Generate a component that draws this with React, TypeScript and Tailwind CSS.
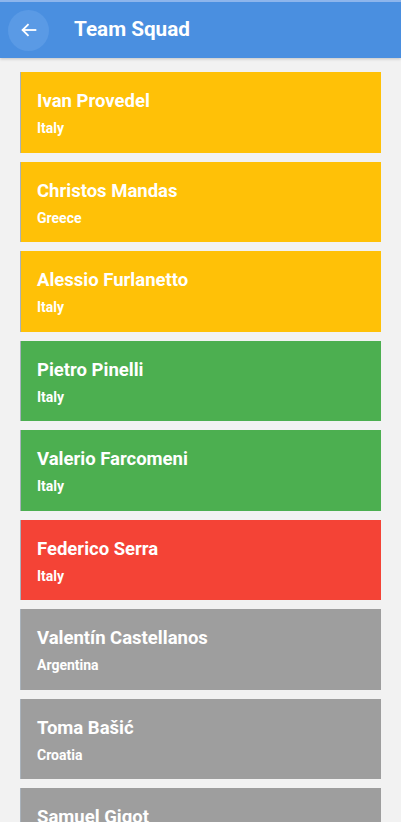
import React from "react";

const players = [
  { name: "Ivan Provedel", country: "Italy", color: "bg-[#FFC107]" },
  { name: "Christos Mandas", country: "Greece", color: "bg-[#FFC107]" },
  { name: "Alessio Furlanetto", country: "Italy", color: "bg-[#FFC107]" },
  { name: "Pietro Pinelli", country: "Italy", color: "bg-[#4CAF50]" },
  { name: "Valerio Farcomeni", country: "Italy", color: "bg-[#4CAF50]" },
  { name: "Federico Serra", country: "Italy", color: "bg-[#F44336]" },
  { name: "Valentín Castellanos", country: "Argentina", color: "bg-[#9E9E9E]" },
  { name: "Toma Bašić", country: "Croatia", color: "bg-[#9E9E9E]" },
  { name: "Samuel Gigot", country: "France", color: "bg-[#9E9E9E]" },
  { name: "Mario Gila", country: "Spain", color: "bg-[#9E9E9E]" },
];

export default function App() {
  return (
    <div
      className="w-[401px] h-[822px] overflow-hidden bg-[#f2f2f2] flex flex-col"
      style={{ fontFamily: "Roboto, 'Noto Sans', sans-serif" }}
    >
      <div className="shrink-0 border-t-2 border-[#8db5ec] bg-[#4a8fe0] h-[58px] flex items-center shadow-[0_1px_3px_rgba(0,0,0,0.2)] z-10">
        <button className="ml-[8px] w-[41px] h-[41px] rounded-full bg-[#5a9ae5] flex items-center justify-center">
          <svg width="22" height="22" viewBox="0 0 24 24" fill="none" stroke="white" strokeWidth="2">
            <path d="M20 12H5" />
            <path d="M11.5 5.5L5 12l6.5 6.5" />
          </svg>
        </button>
        <h1 className="ml-[25px] text-white text-[20.7px] font-bold">Team Squad</h1>
      </div>
      <div className="flex-1 overflow-hidden px-5 pt-[14px]">
        {players.map((p) => (
          <div
            key={p.name}
            className={`${p.color} h-[80.5px] mb-[9px] border-l border-[#a9b2bb] pl-4 pt-[18px]`}
          >
            <div className="text-white text-[18.5px] font-bold leading-[22px]">{p.name}</div>
            <div className="text-white text-[14px] font-bold leading-[18px] mt-[7px]">{p.country}</div>
          </div>
        ))}
      </div>
    </div>
  );
}
